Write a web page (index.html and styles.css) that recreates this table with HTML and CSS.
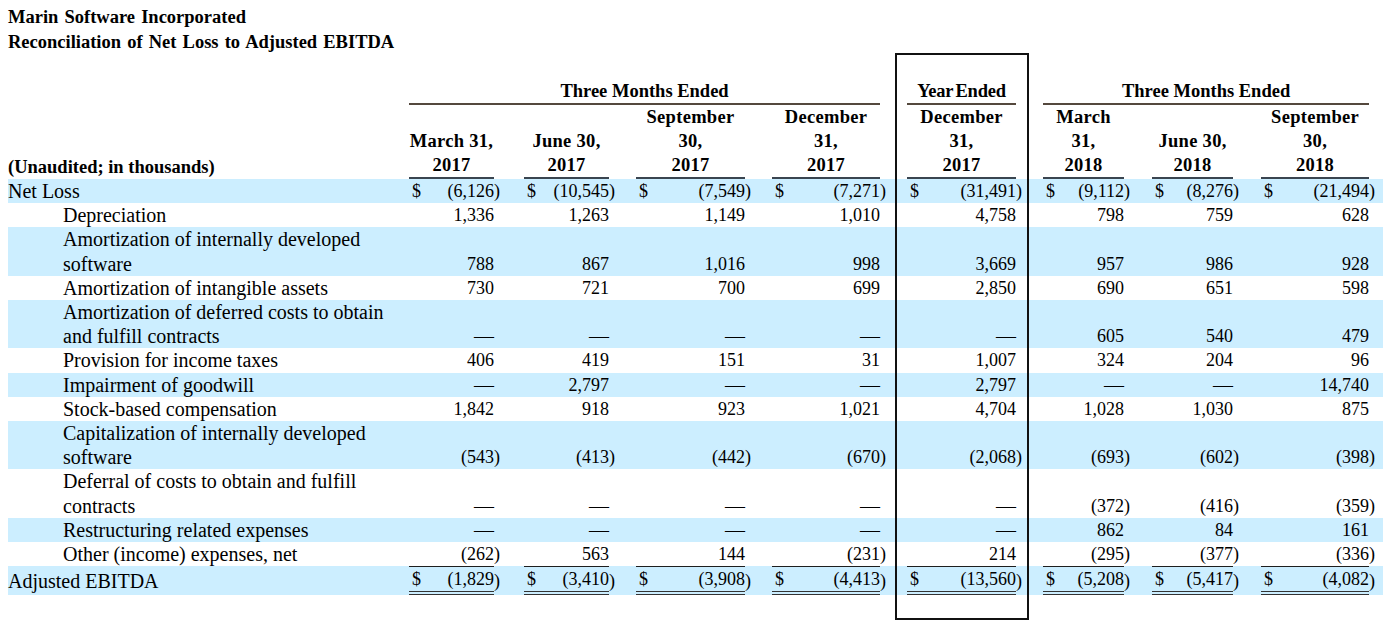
FILE: index.html
```html
<!DOCTYPE html>
<html lang="en">
<head>
<meta charset="utf-8">
<title>Marin Software Incorporated - Reconciliation of Net Loss to Adjusted EBITDA</title>
<link rel="stylesheet" href="styles.css">
</head>
<body>
<div class="page">
  <div class="title">
    <div>Marin Software Incorporated</div>
    <div>Reconciliation of Net Loss to Adjusted EBITDA</div>
  </div>
  <table class="fin">
    <colgroup>
      <col class="w-label">
      <col class="w85"><col class="w30">
      <col class="w85"><col class="w27">
      <col class="w109"><col class="w27">
      <col class="w108"><col class="w27">
      <col class="w109"><col class="w27">
      <col class="w81"><col class="w28">
      <col class="w81"><col class="w28">
      <col class="w108"><col class="w14">
    </colgroup>
    <thead>
      <tr class="grp">
        <th></th>
        <th colspan="7" class="g">Three Months Ended</th>
        <th></th>
        <th class="g tight">Year Ended</th>
        <th></th>
        <th colspan="5" class="g">Three Months Ended</th>
        <th></th>
      </tr>
      <tr class="sub">
        <th class="unaud">(Unaudited; in thousands)</th>
        <th class="col">March 31,<br>2017</th><th></th>
        <th class="col">June 30,<br>2017</th><th></th>
        <th class="col">September<br>30,<br>2017</th><th></th>
        <th class="col">December<br>31,<br>2017</th><th></th>
        <th class="col">December<br>31,<br>2017</th><th></th>
        <th class="col">March<br>31,<br>2018</th><th></th>
        <th class="col">June 30,<br>2018</th><th></th>
        <th class="col">September<br>30,<br>2018</th><th></th>
      </tr>
    </thead>
    <tbody>
      <tr class="alt">
        <td class="lbl">Net Loss</td>
        <td class="v"><span class="cur">$</span>(6,126</td><td class="p">)</td>
        <td class="v"><span class="cur">$</span>(10,545</td><td class="p">)</td>
        <td class="v"><span class="cur">$</span>(7,549</td><td class="p">)</td>
        <td class="v"><span class="cur">$</span>(7,271</td><td class="p">)</td>
        <td class="v"><span class="cur">$</span>(31,491</td><td class="p">)</td>
        <td class="v"><span class="cur">$</span>(9,112</td><td class="p">)</td>
        <td class="v"><span class="cur">$</span>(8,276</td><td class="p">)</td>
        <td class="v"><span class="cur">$</span>(21,494</td><td class="p">)</td>
      </tr>
      <tr>
        <td class="lbl ind">Depreciation</td>
        <td class="v">1,336</td><td class="p"></td>
        <td class="v">1,263</td><td class="p"></td>
        <td class="v">1,149</td><td class="p"></td>
        <td class="v">1,010</td><td class="p"></td>
        <td class="v">4,758</td><td class="p"></td>
        <td class="v">798</td><td class="p"></td>
        <td class="v">759</td><td class="p"></td>
        <td class="v">628</td><td class="p"></td>
      </tr>
      <tr class="alt">
        <td class="lbl ind">Amortization of internally developed<br>software</td>
        <td class="v">788</td><td class="p"></td>
        <td class="v">867</td><td class="p"></td>
        <td class="v">1,016</td><td class="p"></td>
        <td class="v">998</td><td class="p"></td>
        <td class="v">3,669</td><td class="p"></td>
        <td class="v">957</td><td class="p"></td>
        <td class="v">986</td><td class="p"></td>
        <td class="v">928</td><td class="p"></td>
      </tr>
      <tr>
        <td class="lbl ind">Amortization of intangible assets</td>
        <td class="v">730</td><td class="p"></td>
        <td class="v">721</td><td class="p"></td>
        <td class="v">700</td><td class="p"></td>
        <td class="v">699</td><td class="p"></td>
        <td class="v">2,850</td><td class="p"></td>
        <td class="v">690</td><td class="p"></td>
        <td class="v">651</td><td class="p"></td>
        <td class="v">598</td><td class="p"></td>
      </tr>
      <tr class="alt">
        <td class="lbl ind">Amortization of deferred costs to obtain<br>and fulfill contracts</td>
        <td class="v dash">—</td><td class="p"></td>
        <td class="v dash">—</td><td class="p"></td>
        <td class="v dash">—</td><td class="p"></td>
        <td class="v dash">—</td><td class="p"></td>
        <td class="v dash">—</td><td class="p"></td>
        <td class="v">605</td><td class="p"></td>
        <td class="v">540</td><td class="p"></td>
        <td class="v">479</td><td class="p"></td>
      </tr>
      <tr>
        <td class="lbl ind">Provision for income taxes</td>
        <td class="v">406</td><td class="p"></td>
        <td class="v">419</td><td class="p"></td>
        <td class="v">151</td><td class="p"></td>
        <td class="v">31</td><td class="p"></td>
        <td class="v">1,007</td><td class="p"></td>
        <td class="v">324</td><td class="p"></td>
        <td class="v">204</td><td class="p"></td>
        <td class="v">96</td><td class="p"></td>
      </tr>
      <tr class="alt">
        <td class="lbl ind">Impairment of goodwill</td>
        <td class="v dash">—</td><td class="p"></td>
        <td class="v">2,797</td><td class="p"></td>
        <td class="v dash">—</td><td class="p"></td>
        <td class="v dash">—</td><td class="p"></td>
        <td class="v">2,797</td><td class="p"></td>
        <td class="v dash">—</td><td class="p"></td>
        <td class="v dash">—</td><td class="p"></td>
        <td class="v">14,740</td><td class="p"></td>
      </tr>
      <tr>
        <td class="lbl ind">Stock-based compensation</td>
        <td class="v">1,842</td><td class="p"></td>
        <td class="v">918</td><td class="p"></td>
        <td class="v">923</td><td class="p"></td>
        <td class="v">1,021</td><td class="p"></td>
        <td class="v">4,704</td><td class="p"></td>
        <td class="v">1,028</td><td class="p"></td>
        <td class="v">1,030</td><td class="p"></td>
        <td class="v">875</td><td class="p"></td>
      </tr>
      <tr class="alt">
        <td class="lbl ind">Capitalization of internally developed<br>software</td>
        <td class="v">(543</td><td class="p">)</td>
        <td class="v">(413</td><td class="p">)</td>
        <td class="v">(442</td><td class="p">)</td>
        <td class="v">(670</td><td class="p">)</td>
        <td class="v">(2,068</td><td class="p">)</td>
        <td class="v">(693</td><td class="p">)</td>
        <td class="v">(602</td><td class="p">)</td>
        <td class="v">(398</td><td class="p">)</td>
      </tr>
      <tr>
        <td class="lbl ind">Deferral of costs to obtain and fulfill<br>contracts</td>
        <td class="v dash">—</td><td class="p"></td>
        <td class="v dash">—</td><td class="p"></td>
        <td class="v dash">—</td><td class="p"></td>
        <td class="v dash">—</td><td class="p"></td>
        <td class="v dash">—</td><td class="p"></td>
        <td class="v">(372</td><td class="p">)</td>
        <td class="v">(416</td><td class="p">)</td>
        <td class="v">(359</td><td class="p">)</td>
      </tr>
      <tr class="alt">
        <td class="lbl ind">Restructuring related expenses</td>
        <td class="v dash">—</td><td class="p"></td>
        <td class="v dash">—</td><td class="p"></td>
        <td class="v dash">—</td><td class="p"></td>
        <td class="v dash">—</td><td class="p"></td>
        <td class="v dash">—</td><td class="p"></td>
        <td class="v">862</td><td class="p"></td>
        <td class="v">84</td><td class="p"></td>
        <td class="v">161</td><td class="p"></td>
      </tr>
      <tr>
        <td class="lbl ind">Other (income) expenses, net</td>
        <td class="v">(262</td><td class="p">)</td>
        <td class="v">563</td><td class="p"></td>
        <td class="v">144</td><td class="p"></td>
        <td class="v">(231</td><td class="p">)</td>
        <td class="v">214</td><td class="p"></td>
        <td class="v">(295</td><td class="p">)</td>
        <td class="v">(377</td><td class="p">)</td>
        <td class="v">(336</td><td class="p">)</td>
      </tr>
      <tr class="alt tot">
        <td class="lbl">Adjusted EBITDA</td>
        <td class="v"><span class="cur">$</span>(1,829</td><td class="p">)</td>
        <td class="v"><span class="cur">$</span>(3,410</td><td class="p">)</td>
        <td class="v"><span class="cur">$</span>(3,908</td><td class="p">)</td>
        <td class="v"><span class="cur">$</span>(4,413</td><td class="p">)</td>
        <td class="v"><span class="cur">$</span>(13,560</td><td class="p">)</td>
        <td class="v"><span class="cur">$</span>(5,208</td><td class="p">)</td>
        <td class="v"><span class="cur">$</span>(5,417</td><td class="p">)</td>
        <td class="v"><span class="cur">$</span>(4,082</td><td class="p">)</td>
      </tr>
    </tbody>
  </table>
  <div class="yearbox" aria-hidden="true"></div>
</div>
</body>
</html>
```

FILE: styles.css
```css
html, body {
  margin: 0;
  padding: 0;
  background: #ffffff;
}

body {
  color: #000000;
  font-family: "Liberation Serif", "Times New Roman", serif;
}

.page {
  position: relative;
  width: 1400px;
  height: 630px;
  box-sizing: border-box;
  padding: 5px 0 0 8px;
}

.title {
  font-weight: bold;
  font-size: 18.5px;
  line-height: 24.5px;
  word-spacing: 1.5px;
}

.fin {
  margin-top: 25px;
  table-layout: fixed;
  border-collapse: separate;
  border-spacing: 0;
  width: 1375px;
}

.w-label { width: 401px; }
.w85 { width: 85px; }
.w81 { width: 81px; }
.w108 { width: 108px; }
.w109 { width: 109px; }
.w30 { width: 30px; }
.w28 { width: 28px; }
.w27 { width: 27px; }
.w14 { width: 14px; }

.fin th,
.fin td {
  padding: 0;
  white-space: nowrap;
}

.fin th {
  font-weight: bold;
  font-size: 18.5px;
  line-height: 24px;
  text-align: center;
  vertical-align: bottom;
}

.grp .g {
  border-bottom: 2px solid #54483d;
}

.grp .tight {
  word-spacing: -2px;
  letter-spacing: -0.2px;
}

.sub .col {
  border-bottom: 2px solid #3a4550;
  letter-spacing: 0.3px;
}

.sub .unaud {
  text-align: left;
  letter-spacing: 0;
}

.fin td {
  line-height: 24.2px;
  vertical-align: bottom;
}

.fin td.lbl {
  font-size: 20px;
  text-align: left;
}

.fin td.ind {
  padding-left: 55px;
}

.fin td.v {
  font-size: 18px;
  text-align: right;
}

.fin td.dash {
  font-size: 20px;
}

.fin td.p {
  font-size: 18px;
  text-align: left;
}

.cur {
  float: left;
  padding-left: 3px;
}

.alt td {
  background: #cceeff;
}

.tot td {
  vertical-align: middle;
}

.tot td.v {
  border-top: 1px solid #1e1e1e;
  border-bottom: 4px double #333333;
}

.yearbox {
  position: absolute;
  left: 895px;
  top: 53px;
  width: 130px;
  height: 563px;
  border: 2px solid #111111;
  pointer-events: none;
}
```
